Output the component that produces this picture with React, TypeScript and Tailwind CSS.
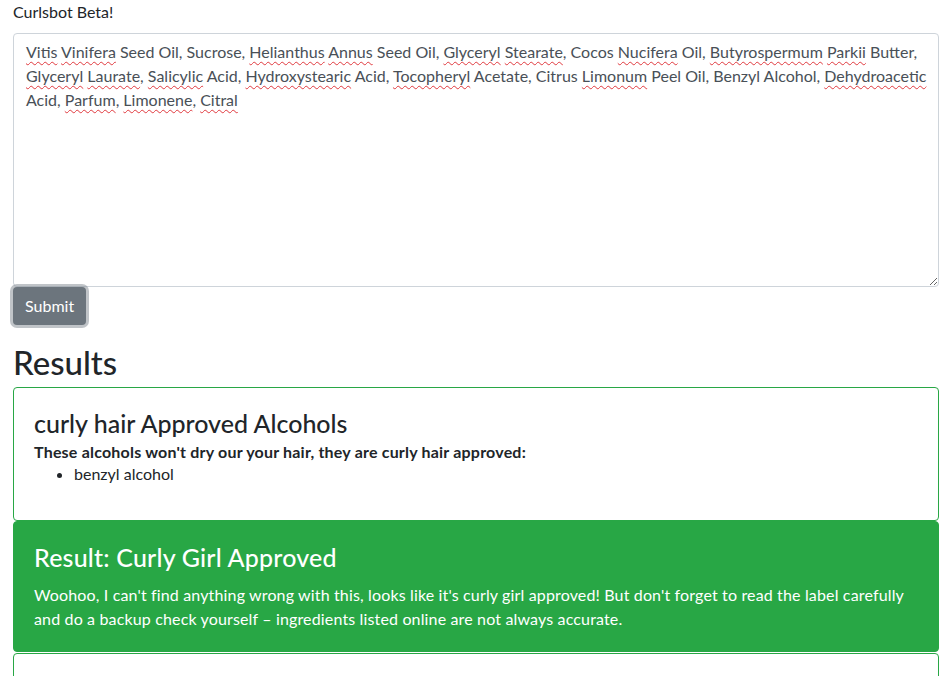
import React from "react";

const ingredients: [string, boolean][] = [
  ["Vitis", true], [" ", false], ["Vinifera", true], [" Seed Oil, Sucrose, ", false],
  ["Helianthus", true], [" ", false], ["Annus", true], [" Seed Oil, ", false],
  ["Glyceryl", true], [" ", false], ["Stearate", true], [", Cocos ", false],
  ["Nucifera", true], [" Oil, ", false], ["Butyrospermum", true], [" ", false],
  ["Parkii", true], [" Butter, ", false], ["Glyceryl", true], [" ", false],
  ["Laurate", true], [", ", false], ["Salicylic", true], [" Acid, ", false],
  ["Hydroxystearic", true], [" Acid, ", false], ["Tocopheryl", true],
  [" Acetate, Citrus ", false], ["Limonum", true],
  [" Peel Oil, Benzyl Alcohol, ", false], ["Dehydroacetic", true],
  [" Acid, ", false], ["Parfum", true], [", ", false], ["Limonene", true],
  [", ", false], ["Citral", true],
];

export default function App() {
  return (
    <div className="min-h-screen bg-white px-[13px] font-['Lato','Segoe_UI',sans-serif] text-[16px] leading-6 text-[#212529]">
      <div className="h-6">Curlsbot Beta!</div>

      <div className="mt-[9px] h-[254px] resize-y overflow-auto rounded border border-[#ced4da] py-1.5 pr-2 pl-3 text-[#495057]">
        {ingredients.map(([word, flagged], i) =>
          flagged ? (
            <span
              key={i}
              className="underline decoration-[#e0393e] decoration-wavy decoration-1 underline-offset-[3px]"
            >
              {word}
            </span>
          ) : (
            <span key={i}>{word}</span>
          )
        )}
      </div>

      <button className="h-[38px] rounded bg-[#6c757d] px-3 text-white shadow-[0_0_0_3px_rgba(130,138,145,0.5)]">
        Submit
      </button>

      <h2 className="mt-[18px] mb-1 text-[33px] leading-[1.2] font-medium">Results</h2>

      <div className="rounded border border-[#28a745] px-5 pt-5 pb-[19px]">
        <h4 className="text-[25px] leading-[30px] font-medium">curly hair Approved Alcohols</h4>
        <p className="mt-[3px] font-bold leading-[22px] tracking-[0.2px]">
          These alcohols won't dry our your hair, they are curly hair approved:
        </p>
        <ul className="mb-4 list-disc pl-10 leading-[22px]">
          <li>benzyl alcohol</li>
        </ul>
      </div>

      <div className="rounded border border-[#28a745] bg-[#28a745] p-5 text-white">
        <h4 className="mb-[11px] text-[25px] leading-[30px] font-medium tracking-[0.2px]">
          Result: Curly Girl Approved
        </h4>
        <p className="tracking-[0.15px]">
          Woohoo, I can't find anything wrong with this, looks like it's curly girl approved! But
          don't forget to read the label carefully and do a backup check yourself – ingredients
          listed online are not always accurate.
        </p>
      </div>

      <div className="mt-px h-10 rounded border border-[#28a745]"></div>
    </div>
  );
}
